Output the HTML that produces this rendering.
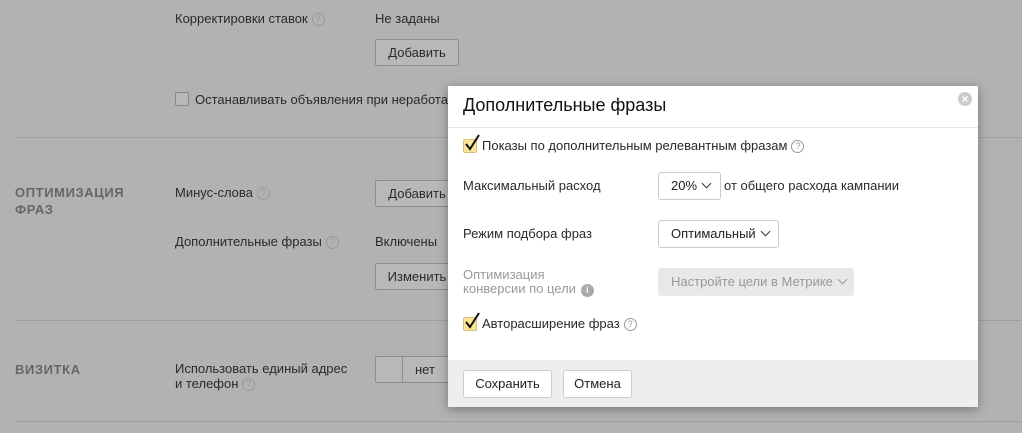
<!DOCTYPE html>
<html><head><meta charset="utf-8"><style>
*{box-sizing:border-box;margin:0;padding:0}
body{width:1022px;height:433px;background:#b2b2b2;font-family:"Liberation Sans",sans-serif;font-size:13px;color:#2a2a2a;position:relative;overflow:hidden}
.a{position:absolute;white-space:nowrap}
.q{display:inline-block;width:13px;height:13px;border:1px solid #999;border-radius:50%;font-size:9px;line-height:11px;text-align:center;color:#999;vertical-align:1px;margin-left:4px}
.btn{position:absolute;border:1px solid #8e8e8e;border-radius:2px;background:#b8b8b8;text-align:center;line-height:25px}
.ln{position:absolute;left:15px;right:0;height:1px;background:#9f9f9f}
.h{position:absolute;font-weight:bold;color:#666;font-size:13px;letter-spacing:.6px;line-height:17px}
.m{position:absolute;left:448px;top:86px;width:530px;height:321px;background:#fff;box-shadow:0 2px 10px rgba(0,0,0,.35)}
.mb{position:absolute;border:1px solid #ccc;border-radius:3px;background:#fff;line-height:25px;padding-left:12px;color:#222}
.cb{position:absolute;width:14px;height:14px;background:#fbe597;border:1px solid #d7c37a;border-radius:2px}
.cb svg{position:absolute;left:0;top:-6px}
.ch{display:inline-block;width:7px;height:7px;border-right:1.3px solid #333;border-bottom:1.3px solid #333;transform:rotate(45deg);margin-left:6px;vertical-align:3px}
</style></head><body>
<div class="a" style="left:175px;top:11px">Корректировки ставок<span class="q">?</span></div>
<div class="a" style="left:375px;top:11px">Не заданы</div>
<div class="btn" style="left:375px;top:39px;width:84px;height:27px">Добавить</div>
<div class="a" style="left:175px;top:92px;width:14px;height:14px;border:1px solid #888;border-radius:2px;background:#b8b8b8"></div>
<div class="a" style="left:195px;top:92px">Останавливать объявления при неработающем сайте</div>
<div class="ln" style="top:137px"></div>
<div class="h" style="left:15px;top:184px">ОПТИМИЗАЦИЯ<br>ФРАЗ</div>
<div class="a" style="left:175px;top:185px">Минус-слова<span class="q">?</span></div>
<div class="btn" style="left:375px;top:180px;width:84px;height:27px">Добавить</div>
<div class="a" style="left:175px;top:234px">Дополнительные фразы<span class="q">?</span></div>
<div class="a" style="left:375px;top:234px">Включены</div>
<div class="btn" style="left:375px;top:263px;width:84px;height:27px">Изменить</div>
<div class="ln" style="top:320px"></div>
<div class="h" style="left:15px;top:361px">ВИЗИТКА</div>
<div class="a" style="left:175px;top:361px;line-height:15px">Использовать единый адрес<br>и телефон<span class="q">?</span></div>
<div class="btn" style="left:375px;top:356px;width:84px;height:27px;text-align:left"><div style="position:absolute;left:26px;top:0;bottom:0;width:1px;background:#8e8e8e"></div><span style="margin-left:39px">нет</span></div>
<div class="ln" style="top:421px"></div>

<div class="m">
<div class="a" style="left:15px;top:9px;font-size:18px;color:#111">Дополнительные фразы</div>
<div class="a" style="left:510px;top:6px;width:14px;height:14px;border-radius:50%;background:#ccc;color:#fff;font-size:12px;line-height:14px;text-align:center;font-weight:bold">×</div>
<div style="position:absolute;left:0;right:0;top:41px;height:1px;background:#e5e5e5"></div>
<div class="cb" style="left:15px;top:53px"><svg width="18" height="20" viewBox="0 0 18 20"><path d="M2 10 L6 15 L15 1" fill="none" stroke="#111" stroke-width="2"/></svg></div>
<div class="a" style="left:34px;top:52px">Показы по дополнительным релевантным фразам<span class="q">?</span></div>
<div class="a" style="left:15px;top:92px">Максимальный расход</div>
<div class="mb" style="left:210px;top:86px;width:63px;height:28px">20%<span class="ch"></span></div>
<div class="a" style="left:276px;top:92px">от общего расхода кампании</div>
<div class="a" style="left:15px;top:140px">Режим подбора фраз</div>
<div class="mb" style="left:210px;top:134px;width:121px;height:28px">Оптимальный<span class="ch"></span></div>
<div class="a" style="left:15px;top:182px;color:#999;line-height:14px">Оптимизация<br>конверсии по цели<span style="display:inline-block;width:13px;height:13px;border-radius:50%;background:#aaa;color:#fff;font-size:9px;line-height:13px;text-align:center;margin-left:5px;font-weight:bold">i</span></div>
<div class="a" style="left:210px;top:182px;width:196px;height:28px;background:#e8e8e8;border-radius:3px;color:#999;line-height:28px;padding-left:13px">Настройте цели в Метрике<span class="ch" style="border-color:#999"></span></div>
<div class="cb" style="left:15px;top:231px"><svg width="18" height="20" viewBox="0 0 18 20"><path d="M2 10 L6 15 L15 1" fill="none" stroke="#111" stroke-width="2"/></svg></div>
<div class="a" style="left:34px;top:230px">Авторасширение фраз<span class="q">?</span></div>
<div style="position:absolute;left:0;right:0;top:274px;bottom:0;background:#eee"></div>
<div class="mb" style="left:15px;top:284px;width:89px;height:28px;padding-left:0;text-align:center">Сохранить</div>
<div class="mb" style="left:115px;top:284px;width:69px;height:28px;padding-left:0;text-align:center">Отмена</div>
</div>
</body></html>
